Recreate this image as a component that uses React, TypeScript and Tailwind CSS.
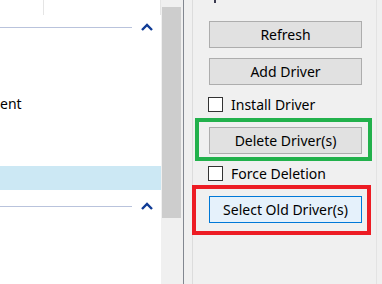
import React from "react";

function Chevron() {
  return (
    <svg width="12" height="8" viewBox="0 0 12 8" className="shrink-0">
      <path d="M1 7 L6 2 L11 7" fill="none" stroke="#103c96" strokeWidth="2.4" strokeLinejoin="miter" />
    </svg>
  );
}

function GroupRow({ lineTop, chevTop }: { lineTop: string; chevTop: string }) {
  return (
    <div className="h-[24px] flex items-start">
      <div className={`w-[132px] h-px bg-[#b9c3dc] ${lineTop}`} />
      <div className={`ml-[9px] ${chevTop}`}>
        <Chevron />
      </div>
    </div>
  );
}

function Btn({ label, selected }: { label: string; selected?: boolean }) {
  return (
    <div
      className={`w-[153px] h-[27px] flex items-center justify-center border text-[14px] leading-none text-black ${
        selected ? "bg-[#e5f1fb] border-[#0078d7]" : "bg-[#e1e1e1] border-[#adadad]"
      }`}
    >
      {label}
    </div>
  );
}

function Check({ label }: { label: string }) {
  return (
    <div className="h-[15px] flex items-center ml-[-1px]">
      <div className="w-[15px] h-[15px] border border-[#333333] bg-white shrink-0" />
      <span className="ml-[8px] text-[14px] leading-[15px] text-black">{label}</span>
    </div>
  );
}

export default function App() {
  return (
    <div className="w-[382px] h-[284px] flex overflow-hidden bg-[#f0f0f0] font-['Noto_Sans',sans-serif]">
      {/* Left list panel */}
      <div className="w-[161px] bg-white flex flex-col shrink-0">
        <div className="h-[15px] flex shrink-0">
          <div className="w-[44px] border-r border-[#e5e5e5]" />
          <div className="w-[117px] border-r border-[#e5e5e5]" />
        </div>
        <GroupRow lineTop="mt-[12px]" chevTop="mt-[8px]" />
        <div className="h-[53px]" />
        <div className="h-[24px] text-[14px] leading-[24px] text-black whitespace-nowrap">ent</div>
        <div className="h-[50px]" />
        <div className="h-[24px] bg-[#cce8f4]" />
        <GroupRow lineTop="mt-[16px]" chevTop="mt-[12px]" />
      </div>

      {/* Scrollbar */}
      <div className="w-[22px] bg-[#f0f0f0] shrink-0">
        <div className="mt-[7px] ml-[1px] w-[19px] h-[211px] bg-[#cdcdcd]" />
      </div>
      <div className="w-px bg-[#828790] shrink-0" />

      {/* Right options panel */}
      <div className="flex-1 flex">
        <div className="ml-[8px] flex-1 border-l border-[#dcdcdc] relative flex">
          <div className="flex-1 flex flex-col pl-[16px] pr-[14px]">
            <div className="absolute left-[21px] top-0 w-[2px] h-[3px] bg-[#3a3a50]" />
            <div className="mt-[21px]">
              <Btn label="Refresh" />
            </div>
            <div className="mt-[10px]">
              <Btn label="Add Driver" />
            </div>
            <div className="mt-[12px]">
              <Check label="Install Driver" />
            </div>
            <div className="mt-[15px] relative w-[153px]">
              <Btn label="Delete Driver(s)" />
              <div className="absolute left-[-14px] right-[-10px] top-[-9px] bottom-[-7px] border-4 border-[#22b14c] pointer-events-none" />
            </div>
            <div className="mt-[12px]">
              <Check label="Force Deletion" />
            </div>
            <div className="mt-[15px] relative w-[153px]">
              <Btn label="Select Old Driver(s)" selected />
              <div className="absolute left-[-17px] right-[-9px] top-[-11px] bottom-[-12px] border-4 border-[#ed1c24] pointer-events-none" />
            </div>
          </div>
          <div className="w-px bg-[#e3e3e3] mr-[5px]" />
        </div>
      </div>
    </div>
  );
}
